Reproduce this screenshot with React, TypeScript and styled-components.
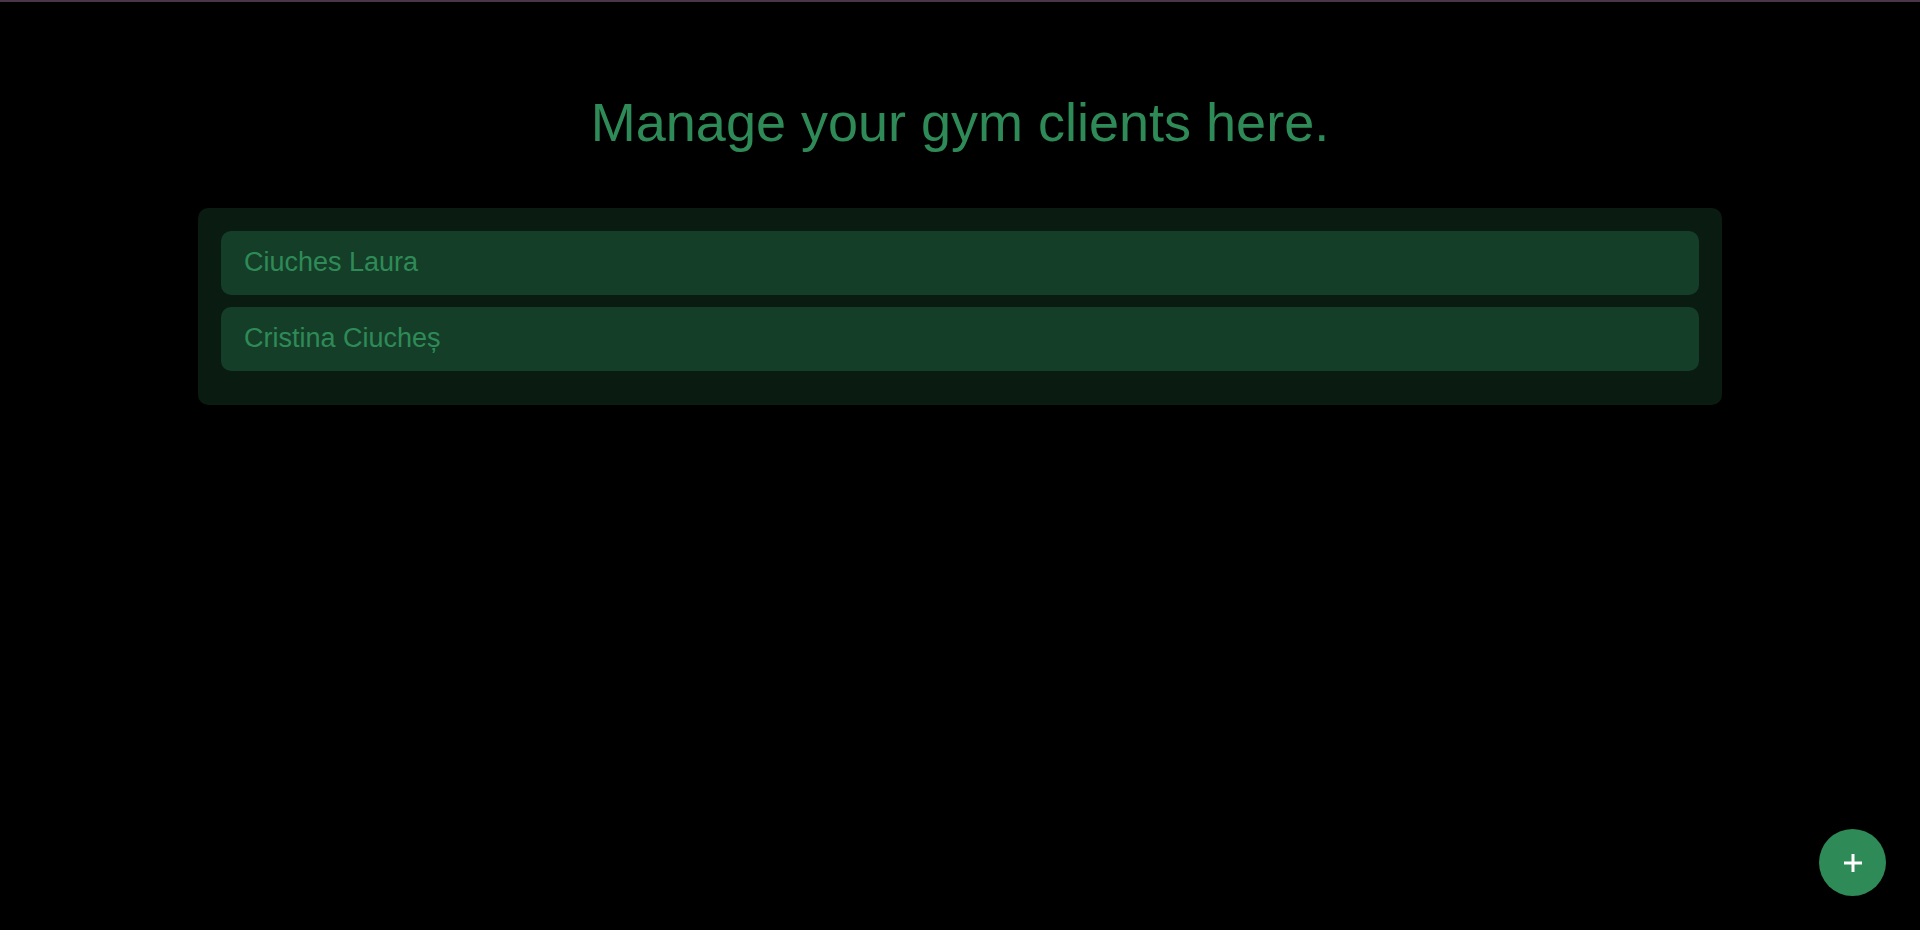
import * as React from "react";
import styled, {createGlobalStyle} from "styled-components";

const clients = ["Ciuches Laura", "Cristina Ciucheș"];

const GlobalStyle = createGlobalStyle`
  html,
  body {
    margin: 0;
    padding: 0;
    background: #000;
  }
  body {
    border-top: 2px solid #4a3649;
    min-height: 928px;
    font-family: "Liberation Sans", Arial, sans-serif;
  }
`;

export const Page = styled.main`
  display: flex;
  flex-direction: column;
  align-items: center;
  padding-top: 89px;
`;

export const Title = styled.h1`
  margin: 0 0 55px;
  font-size: 54px;
  line-height: 62px;
  font-weight: 400;
  color: #2e8b57;
  white-space: nowrap;
`;

export const Panel = styled.section`
  width: 1524px;
  box-sizing: border-box;
  padding: 23px 23px 22px;
  background: #0a1b11;
  border-radius: 10px;
`;

export const Row = styled.div`
  padding: 15px 23px 17px;
  margin-bottom: 12px;
  line-height: 32px;
  font-size: 27px;
  color: #2e8b57;
  background: #153e29;
  border-radius: 10px;
  cursor: pointer;
`;

export const AddButton = styled.button`
  position: fixed;
  right: 34px;
  bottom: 34px;
  width: 67px;
  height: 67px;
  border: none;
  border-radius: 50%;
  background: #2e8b57;
  display: flex;
  align-items: center;
  justify-content: center;
  padding: 0;
  cursor: pointer;
`;

const PlusIcon = () => (
  <svg width="18" height="18" viewBox="0 0 18 18">
    <path d="M9 0v18M0 9h18" stroke="#fff" strokeWidth="3" />
  </svg>
);

export default function App() {
  return (
    <>
      <GlobalStyle />
      <Page>
        <Title>Manage your gym clients here.</Title>
        <Panel>
          {clients.map(name => (
            <Row key={name}>{name}</Row>
          ))}
        </Panel>
      </Page>
      <AddButton aria-label="Add client">
        <PlusIcon />
      </AddButton>
    </>
  );
}
